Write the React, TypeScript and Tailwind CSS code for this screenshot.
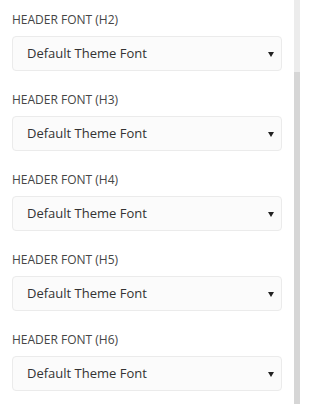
import React from "react";

const levels = ["H2", "H3", "H4", "H5", "H6"];

function FontSelect({ level }: { level: string }) {
  return (
    <div className="mb-[21px]">
      <div className="text-[12px] leading-[16px] text-[#454545] mb-[8px]">HEADER FONT ({level})</div>
      <div className="flex items-center justify-between h-[35px] w-[270px] rounded-[4px] border border-[#ebebeb] bg-[#fbfbfb] pl-[14px] pr-[7px]">
        <span className="text-[13px] text-[#333]">Default Theme Font</span>
        <svg width="6" height="5" viewBox="0 0 6 5" className="mt-[1px]">
          <path d="M0 0H6L3 5Z" fill="#222" />
        </svg>
      </div>
    </div>
  );
}

export default function App() {
  return (
    <div className="flex w-[329px] h-[404px] bg-white overflow-hidden" style={{ fontFamily: '"Open Sans", "Noto Sans", sans-serif' }}>
      <div className="w-[294px] pl-[12px] pt-[12px]">
        {levels.map((l) => (
          <FontSelect key={l} level={l} />
        ))}
      </div>
      <div className="w-[6px] flex flex-col bg-[#ececec]">
        <div className="mt-[72px] flex-1 bg-[#d6d6d6]" />
      </div>
    </div>
  );
}
